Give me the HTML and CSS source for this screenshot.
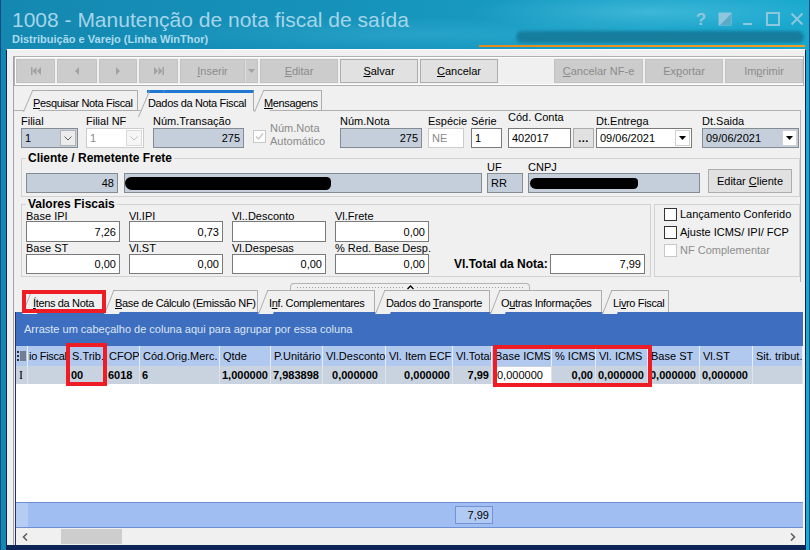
FILE: index.html
```html
<!DOCTYPE html>
<html lang="pt-BR">
<head>
<meta charset="utf-8">
<title>1008 - Manutenção de nota fiscal de saída</title>
<link rel="stylesheet" href="styles.css">
</head>
<body>
<div class="win">
  <header class="titlebar">
    <div class="redact-blur"></div>
    <div class="accent-line"></div>
    <div class="title-text">
      <h1 class="app-title">1008 - Manutenção de nota fiscal de saída</h1>
      <div class="app-sub">Distribuição e Varejo (Linha WinThor)</div>
    </div>
    <div class="wctrls">
      <span class="wc wc-help">?</span>
      <svg class="wc" viewBox="0 0 14 14"><rect x="0.5" y="0.5" width="13" height="13" fill="currentColor"/><polygon points="13,2 13,13 2,13" fill="#5aaac8"/></svg>
      <svg class="wc" viewBox="0 0 14 14"><rect x="1" y="11" width="9" height="2" fill="currentColor"/></svg>
      <svg class="wc" viewBox="0 0 14 14"><rect x="1" y="1" width="12" height="12" fill="none" stroke="currentColor" stroke-width="2"/></svg>
      <svg class="wc" viewBox="0 0 14 14"><path d="M1.5 1.5 L12.5 12.5 M12.5 1.5 L1.5 12.5" stroke="currentColor" stroke-width="2"/></svg>
    </div>
  </header>

  <main class="main">
    <div class="pane">
      <div class="toolbar">
        <div class="tbtn"><svg class="ico" width="10" height="8" viewBox="0 0 10 8"><rect x="0" y="0" width="1.5" height="8"/><polygon points="5.5,0 1.5,4 5.5,8"/><polygon points="10,0 6,4 10,8"/></svg></div>
        <div class="tbtn"><svg class="ico" width="4" height="8" viewBox="0 0 4 8"><polygon points="4,0 0,4 4,8"/></svg></div>
        <div class="tbtn"><svg class="ico" width="4" height="8" viewBox="0 0 4 8"><polygon points="0,0 4,4 0,8"/></svg></div>
        <div class="tbtn"><svg class="ico" width="10" height="8" viewBox="0 0 10 8"><polygon points="0,0 4,4 0,8"/><polygon points="4.5,0 8.5,4 4.5,8"/><rect x="8.5" y="0" width="1.5" height="8"/></svg></div>
        <div class="tsplit">
          <div class="tbtn"><span><u>I</u>nserir</span></div>
          <div class="tbtn tdrop"><svg class="ico" width="7" height="4" viewBox="0 0 7 4"><polygon points="0,0 7,0 3.5,4"/></svg></div>
        </div>
        <div class="tbtn"><span><u>E</u>ditar</span></div>
        <div class="tbtn on"><span><u>S</u>alvar</span></div>
        <div class="tbtn on"><span><u>C</u>ancelar</span></div>
        <div class="tspacer"></div>
        <div class="tbtn"><span><u>C</u>ancelar NF-e</span></div>
        <div class="tbtn"><span>Ex<u>p</u>ortar</span></div>
        <div class="tbtn"><span>Im<u>p</u>rimir</span></div>
      </div>

      <div class="tabs ttabs">
        <div class="tab t-pesq"><span><u>P</u>esquisar Nota Fiscal</span></div>
        <div class="tab sel t-dados"><span>Dados da Nota Fiscal</span></div>
        <div class="tab t-msg"><span><u>M</u>ensagens</span></div>
      </div>

      <section class="tabpanel">
        <div class="row1">
          <div class="fld f-filial">
            <div class="lbl">Filial</div>
            <div class="inp ro combo"><span class="ctext">1</span><span class="cbtn"><svg width="8" height="5" viewBox="0 0 8 5"><polyline points="0.5,0.5 4,4 7.5,0.5" fill="none" stroke="#606060"/></svg></span></div>
          </div>
          <div class="fld f-filialnf">
            <div class="lbl">Filial NF</div>
            <div class="inp dis combo"><span class="ctext">1</span><span class="cbtn dis"><svg width="8" height="5" viewBox="0 0 8 5"><polyline points="0.5,0.5 4,4 7.5,0.5" fill="none" stroke="#c0c0c0"/></svg></span></div>
          </div>
          <div class="fld f-trans">
            <div class="lbl">Núm.Transação</div>
            <div class="inp ro num">275</div>
          </div>
          <div class="f-auto">
            <span class="cbx dis"><svg width="11" height="11" viewBox="0 0 11 11"><polyline points="2,5.5 4.5,8 9,2.5" fill="none" stroke="#c4c4c4" stroke-width="1.3"/></svg></span>
            <span class="auto-txt">Núm.Nota<br>Automático</span>
          </div>
          <div class="fld f-nota">
            <div class="lbl">Núm.Nota</div>
            <div class="inp ro num">275</div>
          </div>
          <div class="fld f-esp">
            <div class="lbl">Espécie</div>
            <div class="inp dis">NE</div>
          </div>
          <div class="fld f-serie">
            <div class="lbl">Série</div>
            <div class="inp">1</div>
          </div>
          <div class="fld f-conta">
            <div class="lbl raised">Cód. Conta</div>
            <div class="conta-row">
              <div class="inp conta-inp">402017</div>
              <div class="btn dots">...</div>
            </div>
          </div>
          <div class="fld f-entrega">
            <div class="lbl">Dt.Entrega</div>
            <div class="inp combo"><span class="ctext">09/06/2021</span><span class="dbtn"><svg width="7" height="4" viewBox="0 0 7 4"><polygon points="0,0 7,0 3.5,4"/></svg></span></div>
          </div>
          <div class="fld f-saida">
            <div class="lbl">Dt.Saida</div>
            <div class="inp ro combo"><span class="ctext">09/06/2021</span><span class="dbtn"><svg width="7" height="4" viewBox="0 0 7 4"><polygon points="0,0 7,0 3.5,4"/></svg></span></div>
          </div>
        </div>

        <fieldset class="grp cliente">
          <legend>Cliente / Remetente Frete</legend>
          <div class="cli-row">
            <div class="inp ro num f-cod">48</div>
            <div class="inp ro f-nome"><span class="scribble s-nome"></span></div>
            <div class="fld f-uf">
              <div class="lbl sm">UF</div>
              <div class="inp ro">RR</div>
            </div>
            <div class="fld f-cnpj">
              <div class="lbl sm">CNPJ</div>
              <div class="inp ro"><span class="scribble s-cnpj"></span></div>
            </div>
            <div class="btn f-edit"><span>Editar <u>C</u>liente</span></div>
          </div>
        </fieldset>

        <div class="row3">
          <fieldset class="grp valores">
            <legend>Valores Fiscais</legend>
            <div class="vf">
              <div class="vgrid">
                <div class="fld"><div class="vl">Base IPI</div><div class="inp num h21">7,26</div></div>
                <div class="fld"><div class="vl">Vl.IPI</div><div class="inp num h21">0,73</div></div>
                <div class="fld"><div class="vl">Vl..Desconto</div><div class="inp num h21"></div></div>
                <div class="fld"><div class="vl">Vl.Frete</div><div class="inp num h21">0,00</div></div>
                <div class="fld r2"><div class="vl">Base ST</div><div class="inp num">0,00</div></div>
                <div class="fld r2"><div class="vl">Vl.ST</div><div class="inp num">0,00</div></div>
                <div class="fld r2"><div class="vl">Vl.Despesas</div><div class="inp num">0,00</div></div>
                <div class="fld r2"><div class="vl">% Red. Base Desp.</div><div class="inp num">0,00</div></div>
              </div>
              <div class="vtotal">
                <span class="vtotal-lbl">Vl.Total da Nota:</span>
                <div class="inp num vtotal-inp">7,99</div>
              </div>
            </div>
          </fieldset>
          <div class="grp checks">
            <div class="chk"><span class="cbx"></span><span>Lançamento Conferido</span></div>
            <div class="chk"><span class="cbx"></span><span>Ajuste ICMS/ IPI/ FCP</span></div>
            <div class="chk dis"><span class="cbx dis"></span><span>NF Complementar</span></div>
          </div>
        </div>
      </section>

      <div class="splitter"><svg class="chev" width="7" height="5" viewBox="0 0 7 5"><polyline points="0.5,4 3.5,1 6.5,4" fill="none" stroke="#000" stroke-width="1.3"/></svg></div>

      <div class="tabs btabs">
        <div class="tab sel b-itens"><span><u>Í</u>tens da Nota</span></div>
        <div class="tab b-base"><span><u>B</u>ase de Cálculo (Emissão NF)</span></div>
        <div class="tab b-inf"><span>I<u>n</u>f. Complementares</span></div>
        <div class="tab b-transp"><span>Dados do <u>T</u>ransporte</span></div>
        <div class="tab b-outras"><span>O<u>u</u>tras Informações</span></div>
        <div class="tab b-livro"><span>Li<u>v</u>ro Fiscal</span></div>
        <div class="redbox rb-tab"></div>
      </div>

      <section class="grid">
        <div class="grouppanel">Arraste um cabeçalho de coluna aqui para agrupar por essa coluna</div>
        <div class="gcols ghead">
          <div class="gc gi"><svg width="9" height="10" viewBox="0 0 9 10"><rect x="0" y="0" width="2" height="2"/><rect x="3" y="0.5" width="6" height="1"/><rect x="0" y="4" width="2" height="2"/><rect x="3" y="4.5" width="6" height="1"/><rect x="0" y="8" width="2" height="2"/><rect x="3" y="8.5" width="6" height="1"/><rect x="3" y="2.5" width="6" height="1"/><rect x="3" y="6.5" width="6" height="1"/></svg></div>
          <div class="gc tight">io Fiscal</div>
          <div class="gc">S.Trib.</div>
          <div class="gc">CFOP</div>
          <div class="gc">Cód.Orig.Merc.</div>
          <div class="gc">Qtde</div>
          <div class="gc">P.Unitário</div>
          <div class="gc">Vl.Desconto</div>
          <div class="gc">Vl. Item ECF</div>
          <div class="gc">Vl.Total</div>
          <div class="gc">Base ICMS</div>
          <div class="gc">% ICMS</div>
          <div class="gc">Vl. ICMS</div>
          <div class="gc">Base ST</div>
          <div class="gc">Vl.ST</div>
          <div class="gc">Sit. tribut.</div>
        </div>
        <div class="gcols grow">
          <div class="gc gi cursor">I</div>
          <div class="gc"></div>
          <div class="gc">00</div>
          <div class="gc">6018</div>
          <div class="gc">6</div>
          <div class="gc">1,000000</div>
          <div class="gc">7,983898</div>
          <div class="gc ctr">0,000000</div>
          <div class="gc rt">0,000000</div>
          <div class="gc rt">7,99</div>
          <div class="gc edit"><span class="edit-box">0,000000</span></div>
          <div class="gc rt">0,00</div>
          <div class="gc">0,000000</div>
          <div class="gc">0,000000</div>
          <div class="gc">0,000000</div>
          <div class="gc"></div>
        </div>
        <div class="gbody"></div>
        <div class="gcols gfoot">
          <div class="gc fi"></div>
          <div class="gc"></div><div class="gc"></div><div class="gc"></div><div class="gc"></div>
          <div class="gc"></div><div class="gc"></div><div class="gc"></div><div class="gc"></div>
          <div class="gc"><span class="sumbox">7,99</span></div>
          <div class="gc"></div><div class="gc"></div><div class="gc"></div><div class="gc"></div><div class="gc"></div><div class="gc"></div>
        </div>
        <div class="hscroll">
          <span class="sarrow"><svg width="6" height="8" viewBox="0 0 6 8"><polyline points="5,0.5 1.5,4 5,7.5" fill="none" stroke="#606060" stroke-width="1.6"/></svg></span>
          <span class="sthumb"></span>
          <span class="sarrow right"><svg width="6" height="8" viewBox="0 0 6 8"><polyline points="1,0.5 4.5,4 1,7.5" fill="none" stroke="#606060" stroke-width="1.6"/></svg></span>
        </div>
        <div class="redbox rb-strib"></div>
        <div class="redbox rb-icms"></div>
      </section>
    </div>
  </main>
</div>
</body>
</html>
```

FILE: styles.css
```css
* { box-sizing: border-box; margin: 0; padding: 0; }
html, body { width: 810px; height: 550px; overflow: hidden; }
body {
  font-family: "Liberation Sans", Arial, sans-serif;
  font-size: 11px;
  color: #000;
  background: #0b4c86;
}
u { text-decoration: underline; text-underline-offset: 1px; }

/* ---------- window frame ---------- */
.win {
  width: 810px;
  height: 550px;
  display: flex;
  flex-direction: column;
  border-left: 1px solid #0a4a85;
  border-right: 1px solid #0a4a85;
  background:
    radial-gradient(ellipse 260px 30px at 650px 12px, rgba(130, 225, 245, .35), transparent 70%),
    radial-gradient(ellipse 420px 24px at 420px 34px, rgba(90, 200, 230, .25), transparent 70%),
    linear-gradient(90deg, #1488b1 0%, #1693bb 45%, #19a8ce 100%);
}

.titlebar {
  height: 49px;
  flex: none;
  display: flex;
  justify-content: space-between;
  position: relative;
  padding: 8px 5px 0 11px;
}
.app-title {
  font-weight: normal;
  font-size: 21px;
  line-height: 24px;
  color: #a5d5e9;
  white-space: nowrap;
}
.app-sub {
  font-weight: bold;
  font-size: 11px;
  line-height: 13px;
  color: #a9dbee;
  margin-top: 1px;
  white-space: nowrap;
}
.wctrls {
  display: flex;
  gap: 10px;
  padding-top: 4px;
  color: #8ec6dd;
}
.wc { width: 14px; height: 14px; display: block; }
.wc-help {
  font: bold 17px/15px "Liberation Sans", Arial, sans-serif;
  text-align: center;
}
.redact-blur {
  position: absolute;
  left: 515px; top: 31px;
  width: 288px; height: 12px;
  border-radius: 6px;
  background: #167d9d;
  filter: blur(1.5px);
}
.accent-line {
  position: absolute;
  left: 478px; top: 45px;
  width: 326px; height: 2px;
  background: linear-gradient(90deg, #e58a1d, #f29d28);
}

.main {
  flex: 1;
  min-height: 0;
  margin: 0 3px 0 5px;
  background: #f0f0f0;
  border-top: 1px solid #fafafa;
  border-left: 1px solid #0d2456;
  border-right: 1px solid #0d2456;
  border-bottom: 5px solid #0d2456;
  padding: 6px 0 0 6px;
  display: flex;
}
.pane {
  flex: 1;
  min-width: 0;
  border-left: 1px solid #a3a3a3;
  display: flex;
  flex-direction: column;
}

/* ---------- toolbar ---------- */
.toolbar {
  height: 30px;
  flex: none;
  margin-right: 1px;
  border: 1px solid #afafaf;
  box-shadow: inset 0 0 0 1px #fff;
  padding: 2px 0 0 1px;
  display: grid;
  grid-template-columns: 39px 40px 38px 39px 78px 78px 78px 78px 1fr 89px 78px 78px;
  grid-template-rows: 24px;
  column-gap: 2px;
}
.tbtn {
  height: 24px;
  border: 1px solid #c3c3c3;
  background: #cccccc;
  color: #8b8b8b;
  display: flex;
  align-items: center;
  justify-content: center;
  white-space: nowrap;
}
.tbtn.on { background: #e1e1e1; border-color: #adadad; color: #000; }
.ico { fill: #a2a2a2; display: block; }
.tsplit { display: flex; }
.tsplit .tbtn:first-child { flex: 1; }
.tdrop { width: 13px; border-left-color: #dedede; }

/* ---------- tabs ---------- */
.tabs {
  display: flex;
  align-items: flex-end;
  flex: none;
  position: relative;
  z-index: 1;
}
.ttabs { height: 20px; margin-top: 4px; padding-left: 9px; }
.btabs { height: 22px; padding-left: 8px; }
.tab {
  position: relative;
  z-index: 0;
  height: 20px;
  margin-left: 9px;
  border-top: 1px solid #adadad;
  border-right: 1px solid #adadad;
  background: #f0f0f0;
  padding-left: 1px;
  display: flex;
  align-items: flex-end;
  line-height: 13px;
  letter-spacing: -0.35px;
  white-space: nowrap;
}
.tab::before {
  content: "";
  position: absolute;
  z-index: -1;
  left: -9px;
  top: -1px;
  width: 14px;
  height: 21px;
  border-left: 1px solid #adadad;
  border-top: 1px solid #adadad;
  background: #f0f0f0;
  transform: skewX(-23deg);
  transform-origin: 0 100%;
}
.ttabs .tab.sel {
  height: 21px;
  margin-bottom: -1px;
  border-top: 3px solid #1f77d1;
  padding-bottom: 1px;
}
.ttabs .tab.sel::before {
  top: -3px;
  height: 24px;
  border-top: 3px solid #1f77d1;
}
.t-pesq { width: 106px; }
.t-dados { width: 107px; }
.t-msg { width: 59px; }

.btabs .tab { height: 22px; padding-left: 2px; padding-bottom: 2px; }
.btabs .tab::before { height: 23px; transform: skewX(-21.5deg); }
.b-itens { width: 73px; }
.b-base { width: 145px; }
.b-inf { width: 108px; }
.b-transp { width: 106px; }
.b-outras { width: 103px; }
.b-livro { width: 58px; }

/* ---------- tab panel ---------- */
.tabpanel {
  width: 787px;
  flex: none;
  border-top: 1px solid #b0b0b0;
  border-right: 1px solid #b0b0b0;
  padding: 4px 0 5px 0;
}
.row1 { display: flex; padding-left: 7px; }
.fld { display: flex; flex-direction: column; }
.lbl { height: 13px; line-height: 13px; white-space: nowrap; }
.lbl.raised { margin-top: -4px; margin-bottom: 4px; }
.lbl.sm { height: 11px; line-height: 11px; }

.inp {
  height: 20px;
  border: 1px solid #7a7a7a;
  background: #fff;
  display: flex;
  align-items: center;
  padding: 0 3px;
  white-space: nowrap;
  overflow: hidden;
}
.inp.num { justify-content: flex-end; }
.inp.ro { background: #c5cfdc; border-color: #858b93; }
.inp.dis { border-color: #cbcbcb; color: #8a8a8a; }
.inp.h21 { height: 21px; }
.combo { padding-right: 1px; }
.ctext { flex: 1; }
.cbtn {
  width: 16px; height: 16px;
  border: 1px solid #b5b5b5;
  background: #ececec;
  display: flex; align-items: center; justify-content: center;
}
.cbtn.dis { border-color: #dadada; background: #f6f6f6; }
.dbtn {
  width: 15px; height: 16px;
  border: 1px solid #d0d0d0;
  background: #fff;
  display: flex; align-items: center; justify-content: center;
}

.f-filial { width: 57px; }
.f-filialnf { width: 58px; margin-left: 8px; }
.f-trans { width: 91px; margin-left: 9px; }
.f-auto { width: 80px; margin-left: 9px; display: flex; align-items: flex-start; }
.f-auto .cbx { margin-top: 15px; margin-right: 4px; }
.auto-txt { margin-top: 7px; line-height: 13px; color: #8a8a8a; white-space: nowrap; }
.f-nota { width: 82px; margin-left: 7px; }
.f-esp { width: 36px; margin-left: 6px; }
.f-serie { width: 31px; margin-left: 7px; }
.f-conta { width: 86px; margin-left: 6px; }
.conta-row { display: flex; }
.conta-inp { width: 63px; }
.dots { width: 21px; height: 20px; margin-left: 2px; font-weight: bold; letter-spacing: .5px; }
.f-entrega { width: 96px; margin-left: 2px; }
.f-saida { width: 97px; margin-left: 10px; }

.btn {
  border: 1px solid #adadad;
  background: #e1e1e1;
  display: flex;
  align-items: center;
  justify-content: center;
  white-space: nowrap;
}

.cbx {
  width: 13px; height: 13px;
  flex: none;
  border: 1px solid #333;
  background: #fff;
  display: flex; align-items: center; justify-content: center;
}
.cbx.dis { border-color: #c8c8c8; }

/* group boxes */
.grp { border: 1px solid #d2d2d2; min-width: 0; }
.grp legend {
  font-weight: bold;
  font-size: 12px;
  line-height: 14px;
  padding: 0 2px;
  white-space: nowrap;
}
.cliente { margin: 3px 0 0 7px; padding: 0 4px 3px 4px; }
.cli-row { display: flex; align-items: flex-end; margin-top: -3px; }
.f-cod { width: 92px; }
.f-nome { width: 358px; margin-left: 6px; padding-left: 0; }
.f-uf { width: 36px; margin-left: 5px; }
.f-cnpj { width: 172px; margin-left: 5px; }
.f-cnpj .inp { padding-left: 1px; }
.f-edit { width: 84px; height: 24px; margin-left: 8px; }
.scribble { display: block; height: 13px; background: #000; border-radius: 7px 5px 6px 8px; }
.s-nome { width: 206px; }
.s-cnpj { width: 108px; height: 11px; }

.row3 { display: flex; align-items: flex-start; padding-left: 7px; }
.valores { width: 630px; padding: 1px 4px 2px 4px; }
.vf { display: flex; align-items: flex-end; }
.vgrid { display: grid; grid-template-columns: repeat(4, 94px); column-gap: 9px; }
.vl { height: 9px; line-height: 9px; white-space: nowrap; }
.vgrid .r2 .vl { margin-top: 2px; margin-bottom: 1px; }
.vtotal { display: flex; align-items: center; margin-left: 25px; }
.vtotal-lbl { width: 96px; font-weight: bold; font-size: 12px; white-space: nowrap; }
.vtotal-inp { width: 95px; }

.checks { width: 146px; height: 73px; margin-left: 3px; margin-top: 7px; padding: 3px 0 0 9px; }
.chk { display: flex; align-items: flex-start; height: 18px; line-height: 13px; white-space: nowrap; }
.chk .cbx { margin-right: 3px; }
.chk.dis { color: #8d8d8d; }

/* splitter */
.splitter {
  width: 240px;
  height: 7px;
  flex: none;
  margin: 1px 0 0 276px;
  border: 1px solid #b3b3b3;
  border-bottom: none;
  border-radius: 4px 4px 0 0;
  display: flex;
  align-items: center;
  justify-content: center;
  background: repeating-linear-gradient(90deg, #9c9c9c 0 1px, transparent 1px 3px) 6px 3px / 226px 1px no-repeat, #f0f0f0;
}
.chev { background: #f0f0f0; padding: 0 2px; width: 11px; display: block; }

/* red highlight boxes */
.redbox { position: absolute; border: 4px solid #ee1c25; z-index: 3; pointer-events: none; }
.rb-tab { left: 8px; top: 0; width: 84px; height: 23px; }
.rb-strib { left: 50px; top: 31px; width: 41px; height: 43px; }
.rb-icms { left: 477px; top: 33px; width: 159px; height: 42px; }

/* ---------- grid ---------- */
.grid {
  flex: 1;
  min-height: 0;
  margin: 0 1px;
  border-left: 1px solid #1e3570;
  border-right: 1px solid #f7f7f7;
  background: #fff;
  display: flex;
  flex-direction: column;
  position: relative;
}
.grouppanel {
  height: 34px;
  flex: none;
  background: #3d6ebf;
  color: #dce6f5;
  padding-left: 8px;
  display: flex;
  align-items: center;
  white-space: nowrap;
}
.gcols {
  display: grid;
  grid-template-columns: 12px 41px 37px 34px 80px 51px 52px 63px 67px 39px 60px 44px 52px 52px 53px 1fr;
  flex: none;
}
.gc { white-space: nowrap; overflow: hidden; padding-left: 3px; }
.ghead { height: 20px; background: #b1c9ee; }
.ghead .gc { line-height: 20px; border-right: 1px solid #e6eef9; }
.ghead .tight { padding-left: 1px; letter-spacing: -0.3px; }
.ghead .gi { padding: 0; display: flex; align-items: center; justify-content: center; fill: #333; }
.grow { height: 18px; background: #c9d2df; font-weight: bold; }
.grow .gc { line-height: 18px; border-right: 1px solid #dde3ec; padding-left: 2px; }
.grow .rt { text-align: right; padding-right: 2px; }
.grow .ctr { text-align: center; }
.grow .cursor { font: 12px/18px "Liberation Serif", serif; padding-left: 3px; }
.grow .edit { padding: 1px 0 1px 1px; }
.edit-box {
  display: block;
  height: 16px;
  line-height: 16px;
  background: #fff;
  font-weight: normal;
  padding-left: 4px;
}
.gbody { flex: 1; background: #fff; }
.gfoot {
  height: 26px;
  background: #a1bef3;
  border-top: 1px solid #6f8fd3;
  border-bottom: 1px solid #6f8fd3;
  align-items: center;
}
.gfoot .gc { padding: 0; overflow: visible; }
.gfoot .fi { height: 24px; background: #b6cdf3; }
.sumbox {
  display: block;
  width: 38px;
  height: 18px;
  margin-left: 2px;
  line-height: 16px;
  text-align: right;
  padding-right: 3px;
  background: #b1caf4;
  border: 1px solid #7393d5;
}
.hscroll {
  height: 17px;
  flex: none;
  background: #f0f0f0;
  display: flex;
  align-items: center;
}
.sarrow { width: 17px; height: 17px; display: flex; align-items: center; justify-content: center; }
.sarrow.right { margin-left: auto; margin-right: 2px; }
.sthumb { width: 61px; height: 15px; margin-left: 28px; background: #cdcdcd; }
```
